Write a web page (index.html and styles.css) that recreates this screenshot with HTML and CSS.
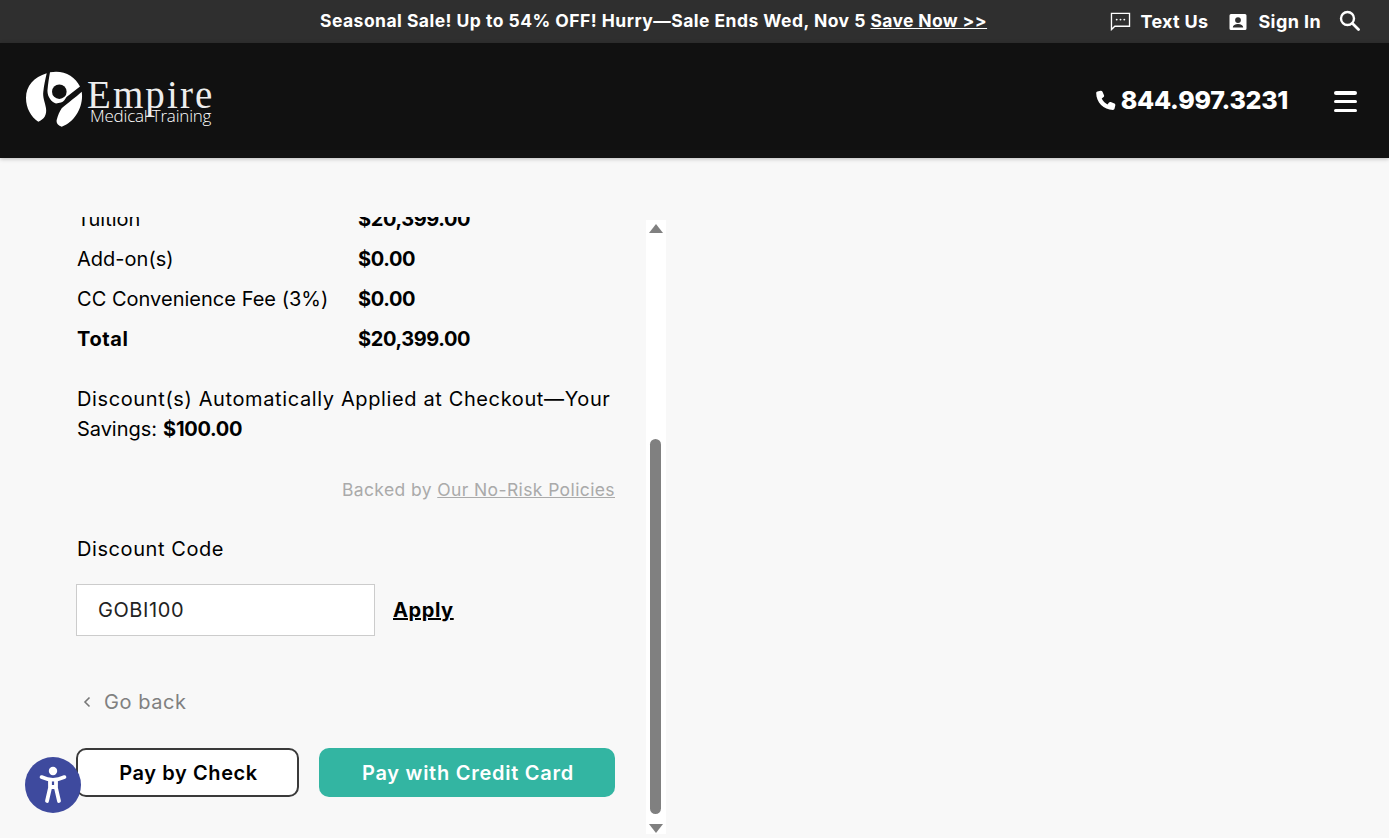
FILE: index.html
```html
<!DOCTYPE html>
<html lang="en">
<head>
<meta charset="utf-8">
<title>Empire Medical Training</title>
<link rel="stylesheet" href="styles.css">
</head>
<body>
<div class="topbar">
  <p class="promo">Seasonal Sale! Up to 54% OFF! Hurry—Sale Ends Wed, Nov 5 <a href="#">Save Now &gt;&gt;</a></p>
  <div class="toplinks">
    <a class="toplink toplink-text" href="#">
      <svg class="ic-chat" viewBox="0 0 22 20" width="21" height="19"><path d="M1.500 1.500h19v13.500H5L1.500 18.500z" fill="none" stroke="#fff" stroke-width="1.400"/><circle cx="7" cy="8" r="1" fill="#fff"/><circle cx="11" cy="8" r="1" fill="#fff"/><circle cx="15" cy="8" r="1" fill="#fff"/></svg>
      Text Us</a>
    <a class="toplink toplink-sign" href="#">
      <svg viewBox="0 0 18 18" width="18" height="18"><path fill="#fff" fill-rule="evenodd" d="M2 1h14a1.500 1.500 0 0 1 1.500 1.500v13A1.500 1.500 0 0 1 16 17H2a1.500 1.500 0 0 1-1.500-1.500v-13A1.500 1.500 0 0 1 2 1zm7 3.200a2.900 2.900 0 1 0 0 5.800 2.900 2.900 0 0 0 0-5.800zM3.800 14.500h10.400c0-2.300-2.300-3.500-5.200-3.500s-5.200 1.200-5.200 3.500z"/></svg>
      Sign In</a>
    <svg class="ic-search" viewBox="0 0 21 21" width="21" height="21"><circle cx="8.500" cy="8.500" r="6.500" fill="none" stroke="#fff" stroke-width="2.400"/><path d="M13.500 13.500l6 6" stroke="#fff" stroke-width="2.800" stroke-linecap="round"/></svg>
  </div>
</div>
<header class="header">
  <a class="logo" href="#">
    <svg class="logomark" viewBox="0 0 58 58" width="58" height="58">
      <path fill="#fff" d="M21.700 3.300C9 7 1 16 1 28c0 10 5 19 12.300 23.700C19 49.500 22 45 21 38.300 20 32 17.500 27 18.300 21.700 19 15 20.500 9 21.700 3.300z"/>
      <path fill="#fff" d="M25 2.300C38-.5 50 6 55 16.500L41.500 27c-1.500 2.500-3 5-5.500 5.500-1.700.5-3.300.6-5 1C26 32 22 26 22.500 20 23 14 24 8 25 2.300z"/>
      <path fill="#fff" d="M56.700 21.700C59 36 50 52 36.700 56.700 33 55.500 31 53 31.700 50c1-4.500 3-8.500 5-11.700 3-3 6.500-5.300 10-8.300 3.500-2.700 7-5.500 10-8.300z"/>
      <circle cx="34.300" cy="21.700" r="7.300" fill="#111"/>
    </svg>
    <span class="logotext"><span class="logo-big">Empire</span><span class="logo-small">Medical Training</span></span>
  </a>
  <div class="headright">
    <a class="phone" href="#">
      <svg viewBox="0 0 20 20" width="20" height="20"><path fill="#fff" d="M4.600.8 1.400 1.600C.7 1.800.2 2.400.2 3.100c0 9.300 7.500 16.800 16.800 16.800.7 0 1.300-.5 1.500-1.200l.8-3.300c.2-.7-.2-1.500-.9-1.800l-3.600-1.500c-.6-.3-1.400-.1-1.800.4l-1.500 1.900c-2.500-1.200-4.600-3.300-5.800-5.800l1.900-1.500c.5-.4.700-1.200.4-1.800L6.500 1.700C6.200 1 5.300.6 4.600.8z"/></svg>
      844.997.3231</a>
    <button class="burger" aria-label="Menu"><span></span><span></span><span></span></button>
  </div>
</header>
<main class="main">
  <div class="panel">
    <div class="scrollview">
      <div class="scrollcontent">
        <div class="row"><span class="lbl">Tuition</span><b class="val">$20,399.00</b></div>
        <div class="row"><span class="lbl">Add-on(s)</span><b class="val">$0.00</b></div>
        <div class="row"><span class="lbl">CC Convenience Fee (3%)</span><b class="val">$0.00</b></div>
        <div class="row"><b class="lbl">Total</b><b class="val">$20,399.00</b></div>
        <p class="savings">Discount(s) Automatically Applied at Checkout—Your <span class="tight">Savings:</span> <b>$100.00</b></p>
        <p class="backed">Backed by <a href="#">Our No-Risk Policies</a></p>
        <label class="codelabel" for="code">Discount Code</label>
        <div class="coderow">
          <input id="code" class="codeinput" value="GOBI100">
          <a class="apply" href="#">Apply</a>
        </div>
        <a class="goback" href="#"><svg viewBox="0 0 8 12" width="8" height="12"><path d="M6.500 1.500 2 6l4.500 4.500" fill="none" stroke="#777" stroke-width="1.600"/></svg>Go back</a>
        <div class="actions">
          <button class="btn btn-outline">Pay by Check</button>
          <button class="btn btn-teal">Pay with Credit Card</button>
        </div>
      </div>
    </div>
    <div class="scrollbar">
      <i class="arrow up"></i>
      <div class="track"><div class="thumb"></div></div>
      <i class="arrow down"></i>
    </div>
  </div>
</main>
<button class="a11y" aria-label="Accessibility">
  <svg viewBox="0 0 32 40" width="32" height="40"><circle cx="16" cy="6" r="4.200" fill="#fff"/><path d="M4.500 12c4 1.800 7.500 2.700 11.500 2.700s7.500-.9 11.500-2.700" fill="none" stroke="#fff" stroke-width="3.600" stroke-linecap="round"/><path d="M13 15v8l-3 13M19 15v8l3 13M13 22h6" fill="none" stroke="#fff" stroke-width="3.800" stroke-linecap="round" stroke-linejoin="round"/></svg>
</button>
</body>
</html>
```
FILE: styles.css
```css
* { box-sizing: border-box; }
html, body { margin: 0; height: 100%; }
body {
  height: 838px;
  overflow: hidden;
  background: #f8f8f8;
  color: #000;
  font-family: Inter, "Liberation Sans", sans-serif;
  font-size: 20px;
  letter-spacing: .58px;
}
a { color: inherit; }
.topbar {
  height: 43px;
  background: #2f2f2f;
  color: #fff;
  display: flex;
  align-items: center;
  padding-left: 320px;
  font-weight: 700;
}
.promo {
  margin: 0;
  font-size: 17.500px;
  line-height: 40px;
  white-space: nowrap;
  letter-spacing: .47px;
  margin-bottom: 2px;
}
.promo a { letter-spacing: .36px; }
.toplinks {
  margin-left: auto;
  display: flex;
  align-items: center;
  padding-right: 29px;
  font-size: 18px;
  letter-spacing: .4px;
}
.toplink {
  display: flex;
  align-items: center;
  gap: 10px;
  text-decoration: none;
}
.toplink-text { margin-right: 21px; letter-spacing: .3px; }
.toplink-sign { margin-right: 18px; gap: 11px; }
.ic-search { margin-top: -2px; }
.header {
  height: 115px;
  background: #111;
  color: #fff;
  display: flex;
  align-items: center;
  justify-content: space-between;
  padding: 0 32px 0 25px;
  box-shadow: 0 1px 4px rgba(0,0,0,.25);
  position: relative;
}
.logo {
  display: flex;
  align-items: center;
  gap: 5px;
  text-decoration: none;
}
.logomark { margin-top: -3px; }
.logotext { display: flex; flex-direction: column; letter-spacing: 0; margin-top: 2px; }
.logo-big {
  font-family: "Liberation Serif", serif;
  font-size: 39px;
  line-height: 28px;
  letter-spacing: 2.100px;
  color: #eee;
  margin: 1px 0 -2px -1px;
}
.logo-small {
  font-family: "Open Sans", sans-serif;
  font-weight: 300;
  font-size: 17px;
  line-height: 17px;
  letter-spacing: -.2px;
  margin-left: 2px;
  color: #fff;
}
.headright { display: flex; align-items: center; }
.phone {
  display: flex;
  align-items: center;
  gap: 5px;
  font-size: 25px;
  font-weight: 800;
  letter-spacing: -.3px;
  text-decoration: none;
  margin: 0 46px 2px 0;
}
.burger {
  width: 23px;
  height: 21px;
  padding: 0;
  border: 0;
  background: none;
  display: flex;
  flex-direction: column;
  justify-content: space-between;
  margin-top: 2px;
}
.burger span { display: block; height: 3.500px; background: #fff; border-radius: 2px; }
.main { padding-left: 76px; }
.panel { display: flex; align-items: flex-start; height: 680px; }
.scrollview {
  width: 539px;
  height: 617px;
  margin-top: 59px;
  overflow: hidden;
}
.scrollcontent { margin-top: -18px; }
.row { display: flex; height: 40px; align-items: center; padding-left: 1px; }
.row b { font-weight: 700; }
.lbl { width: 281px; letter-spacing: .02px; }
.row b.lbl { letter-spacing: .6px; }
.val { letter-spacing: -.4px; }
.savings { margin: 25px 0 0; padding-left: 1px; line-height: 30px; letter-spacing: .62px; }
.tight { letter-spacing: -.05px; }
.savings b { font-weight: 700; letter-spacing: -.3px; }
.backed {
  margin: 35px 0 0;
  text-align: right;
  font-size: 17.500px;
  letter-spacing: .39px;
  color: #aaa;
}
.codelabel { display: block; margin-top: 37px; padding-left: 1px; }
.coderow { display: flex; align-items: center; margin-top: 23px; }
.codeinput {
  width: 299px;
  height: 52px;
  padding: 0 21px;
  border: 1px solid #ccc;
  background: #fff;
  font: inherit;
  letter-spacing: .58px;
  color: #222;
}
.apply { margin-left: 18px; font-weight: 700; }
.goback {
  display: flex;
  align-items: center;
  gap: 13px;
  margin-top: 54px;
  padding-left: 7px;
  color: #808080;
  text-decoration: none;
}
.actions { display: flex; gap: 20px; margin-top: 34px; }
.btn {
  height: 49px;
  border-radius: 10px;
  font: inherit;
  font-weight: 600;
  letter-spacing: .6px;
  padding: 0 0 0 2px;
}
.btn-outline { width: 223px; background: #fff; border: 2px solid #3a3a3a; color: #000; }
.btn-teal { width: 296px; background: #33b5a2; border: 0; color: #fff; letter-spacing: .75px; }
.scrollbar {
  width: 20px;
  height: 614px;
  margin: 62px 0 0 31px;
  background: #fff;
  display: flex;
  flex-direction: column;
  align-items: center;
  padding: 4px 1px 1px 0;
}
.arrow { width: 0; height: 0; border-left: 7px solid transparent; border-right: 7px solid transparent; }
.arrow.up { border-bottom: 9px solid #808080; }
.arrow.down { border-top: 9px solid #808080; }
.track { flex: 1; width: 11px; padding-top: 206px; padding-bottom: 10px; }
.thumb { height: 100%; background: #808080; border-radius: 6px; }
.a11y {
  position: fixed;
  left: 25px;
  top: 757px;
  width: 56px;
  height: 56px;
  padding: 0;
  border: 0;
  border-radius: 50%;
  background: #3e4a9e;
  display: flex;
  align-items: center;
  justify-content: center;
}
```
